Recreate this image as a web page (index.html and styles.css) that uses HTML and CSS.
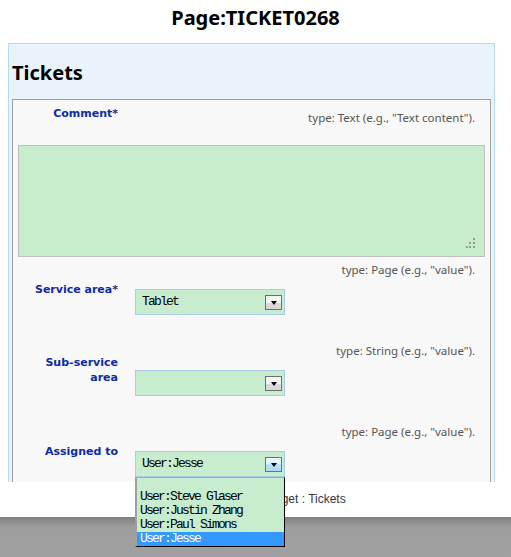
FILE: index.html
```html
<!DOCTYPE html>
<html>
<head>
<meta charset="utf-8">
<title>Page:TICKET0268</title>
<link rel="stylesheet" href="styles.css">
</head>
<body>
<div class="page">
  <div class="viewport">
    <h1 class="page-title">Page:TICKET0268</h1>
    <div class="panel">
      <h2 class="panel-title">Tickets</h2>
      <div class="form-box">
        <div class="comment-head">
          <div class="label">Comment*</div>
          <div class="hint hint-comment">type: Text (e.g., "Text content").</div>
        </div>
        <div class="textarea">
          <svg class="grip" width="12" height="12" viewBox="0 0 12 12">
            <rect x="8" y="1" width="2" height="2" fill="#9a9a9a"/>
            <rect x="4" y="5" width="2" height="2" fill="#9a9a9a"/>
            <rect x="8" y="5" width="2" height="2" fill="#9a9a9a"/>
            <rect x="1" y="9" width="2" height="2" fill="#9a9a9a"/>
            <rect x="4" y="9" width="2" height="2" fill="#9a9a9a"/>
            <rect x="8" y="9" width="2" height="2" fill="#9a9a9a"/>
          </svg>
        </div>

        <div class="field field-first">
          <div class="label">Service area*</div>
          <div class="control">
            <div class="hint">type: Page (e.g., "value").</div>
            <div class="select"><span class="select-text">Tablet</span><span class="btn"><span class="arrow"></span></span></div>
          </div>
        </div>

        <div class="field">
          <div class="label">Sub-service area</div>
          <div class="control">
            <div class="hint">type: String (e.g., "value").</div>
            <div class="select"><span class="select-text"></span><span class="btn"><span class="arrow"></span></span></div>
          </div>
        </div>

        <div class="field">
          <div class="label">Assigned to</div>
          <div class="control">
            <div class="hint">type: Page (e.g., "value").</div>
            <div class="select"><span class="select-text">User:Jesse</span><span class="btn btn-active"><span class="arrow"></span></span></div>
          </div>
        </div>
      </div>
    </div>
  </div>
  <div class="target-line">Target : Tickets</div>
  <div class="footer"></div>

  <ul class="dropdown">
    <li class="opt opt-empty"></li>
    <li class="opt">User:Steve Glaser</li>
    <li class="opt">User:Justin Zhang</li>
    <li class="opt">User:Paul Simons</li>
    <li class="opt opt-selected">User:Jesse</li>
  </ul>
</div>
</body>
</html>
```
FILE: styles.css
```css
html, body {
  margin: 0;
  padding: 0;
  background: #ffffff;
}
.page {
  position: relative;
  width: 511px;
  height: 557px;
  overflow: hidden;
}
.viewport {
  height: 482px;
  overflow: hidden;
}
.page-title {
  margin: 0 0 12px 0;
  padding-top: 4px;
  font: bold 20px/27px "Noto Sans", sans-serif;
  text-align: center;
  color: #000;
}
.panel {
  margin-left: 8px;
  width: 479px;
  border: 1px solid #b4dcef;
  background: #eaf3fb;
  padding: 15px 3px 0 3px;
}
.panel-title {
  margin: 0 0 13px 0;
  font: bold 20px/27px "Noto Sans", sans-serif;
  color: #000;
}
.form-box {
  border: 1px solid #a0a0a0;
  background: #f8f8f8;
  padding: 0 5px 40px 5px;
}
.label {
  width: 100px;
  text-align: right;
  font: bold 11px/15px "DejaVu Sans", sans-serif;
  color: #0f2ba6;
}
.hint {
  text-align: right;
  padding-right: 10px;
  font: 11.5px/14px "Noto Sans", sans-serif;
  color: #555555;
}
.comment-head {
  display: flex;
  justify-content: space-between;
  height: 25px;
}
.comment-head .label {
  padding-top: 6px;
}
.hint-comment {
  padding-top: 11px;
}
.textarea {
  position: relative;
  margin-top: 20px;
  height: 110px;
  border: 1px solid #c0c0c0;
  background: #c8edcd;
}
.grip {
  position: absolute;
  right: 7px;
  bottom: 7px;
}
.field {
  display: grid;
  grid-template-columns: 100px 1fr;
  column-gap: 17px;
  align-items: center;
  margin-top: 29px;
}
.field-first {
  margin-top: 6px;
}
.field .hint {
  margin-bottom: 12px;
}
.select {
  box-sizing: border-box;
  width: 150px;
  height: 26px;
  border: 1px solid #a8cbe6;
  background: #c8ecce;
  display: flex;
  align-items: center;
  justify-content: space-between;
  padding: 0 2px 0 6px;
}
.select-text, .opt {
  font: 13px/14px "Liberation Mono", monospace;
  letter-spacing: -1.8px;
  color: #000;
}
.btn {
  box-sizing: border-box;
  width: 17px;
  height: 15px;
  border: 1px solid #6e6e6e;
  background: linear-gradient(#f4f4f4 0, #f4f4f4 50%, #dcdcdc 50%, #d6d6d6 100%);
  display: flex;
  align-items: flex-end;
  justify-content: center;
  padding-bottom: 4px;
  margin-top: 1px;
}
.btn-active {
  border-color: #3d7fb2;
  background: linear-gradient(#e6f4fd 0, #e6f4fd 45%, #bfe3f9 50%, #a9d8f6 100%);
}
.arrow {
  width: 0;
  height: 0;
  border-left: 3.5px solid transparent;
  border-right: 3.5px solid transparent;
  border-top: 4px solid #000;
}
.target-line {
  height: 35px;
  padding-left: 265px;
  font: 12px/35px "Liberation Sans", sans-serif;
  color: #333344;
}
.footer {
  height: 40px;
  background: linear-gradient(#7f7f7f 0, #9e9e9e 10px, #a0a0a0 100%);
}
.dropdown {
  position: absolute;
  left: 135px;
  top: 477px;
  width: 147px;
  margin: 0;
  padding: 0;
  list-style: none;
  border-left: 2px solid #a0a0a0;
  border-top: 1px solid #a8a8a8;
  border-right: 1px solid #000;
  border-bottom: 1px solid #000;
  background: #c8ecce;
}
.opt {
  height: 14px;
  padding-left: 3px;
  white-space: pre;
}
.opt-empty {
  height: 12px;
}
.opt-selected {
  background: #3399ff;
  color: #fff;
}
```
